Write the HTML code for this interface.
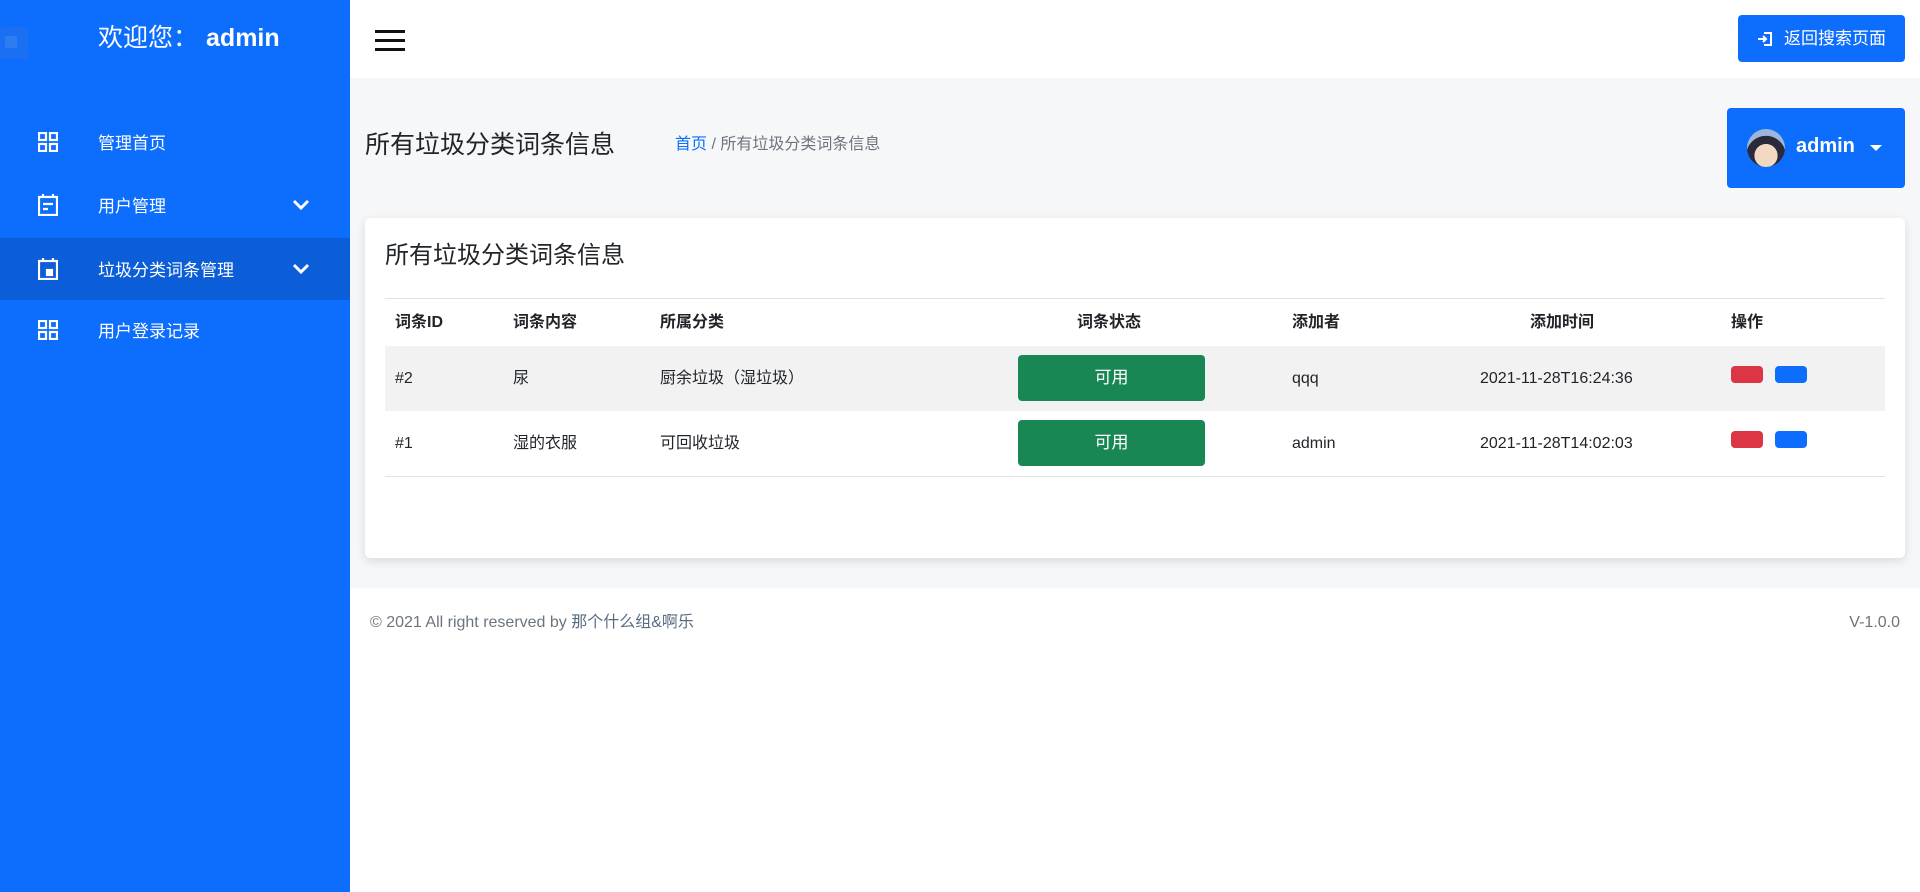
<!DOCTYPE html>
<html><head><meta charset="utf-8"><style>
*{box-sizing:border-box;margin:0;padding:0}
body{width:1920px;height:892px;overflow:hidden;font-family:"Liberation Sans","Noto Sans CJK SC",sans-serif;background:#fff;position:relative;color:#212529}
.side{position:absolute;left:0;top:0;width:350px;height:892px;background:#0d6efd;color:#fff}
.welcome{position:absolute;left:98px;top:23px;font-size:25px;line-height:30px}
.welcome b{font-weight:600;margin-left:8px}
.logo{position:absolute;left:0;top:27px;width:28px;height:32px;border-radius:4px;background:#1a6ff2}
.logo i{position:absolute;left:5px;top:9px;width:12px;height:12px;background:#2f7cf0}
.nav{position:absolute;left:0;width:350px;height:62px;font-size:17px}
.nav span{position:absolute;left:98px;top:21px;line-height:24px}
.nav svg.ic{position:absolute;left:38px;top:50%;transform:translateY(-50%)}
.nav svg.ch{position:absolute;left:292px;top:50%;transform:translateY(-50%)}
.nav.act{background:#0b5ed7}
.top{position:absolute;left:350px;top:0;right:0;height:78px;background:#fff}
.ham{position:absolute;left:375px;top:30px;width:30px}
.ham i{display:block;height:3px;background:#111;margin-bottom:6px}
.ret{position:absolute;left:1738px;top:15px;width:167px;height:47px;background:#0d6efd;border-radius:4px;color:#fff;font-size:17px;line-height:47px;padding-left:46px}
.ret svg{position:absolute;left:19px;top:16px}
.main{position:absolute;left:350px;top:78px;right:0;height:510px;background:#f6f7f9}
.ptitle{position:absolute;left:365px;top:128px;font-size:25px;line-height:34px;color:#212529}
.bc{position:absolute;left:675px;top:134px;font-size:16px;line-height:22px;color:#6c757d}
.bc a{color:#0d6efd}
.dd{position:absolute;left:1727px;top:108px;width:178px;height:80px;background:#0d6efd;border-radius:4px;color:#fff;font-size:20px;font-weight:600}
.av{position:absolute;left:20px;top:21px;width:38px;height:38px;border-radius:50%;background:radial-gradient(circle at 50% 70%,#f3d9c4 0 35%,#2a2a3a 36% 60%,#9bb6d8 61%)}
.dd span{position:absolute;left:69px;top:27px}
.dd .car{position:absolute;left:143px;top:37px;border:6px solid transparent;border-top:6px solid #fff;border-bottom:0}
.card{position:absolute;left:365px;top:218px;width:1540px;height:340px;background:#fff;border-radius:5px;box-shadow:0 3px 10px rgba(0,0,0,.12)}
.ctitle{position:absolute;left:385px;top:239px;font-size:24px;line-height:34px}
.tb{position:absolute;left:385px;width:1500px}
.c{position:absolute;top:50%;margin-top:-12px;height:24px;line-height:24px;font-size:16px;white-space:nowrap}
.h .c{font-weight:700;font-size:16px}
.st{position:absolute;left:1018px;top:9px;width:187px;height:46px;background:#198754;color:#fff;border-radius:4px;text-align:center;line-height:46px;font-size:17px}
.bt{position:absolute;top:20px;width:32px;height:17px;border-radius:4px}
.foot{position:absolute;top:611px;font-size:16px;line-height:24px;height:24px;color:#6c757d}
</style></head><body>
<div class="side">
 <div class="logo"><i></i></div>
 <div class="welcome">欢迎您：<b>admin</b></div>
 <div class="nav" style="top:111px"><svg class="ic" width="20" height="20" viewBox="0 0 20 20" fill="none" stroke="#fff" stroke-width="2.2"><rect x="1" y="1" width="7" height="7"/><rect x="12" y="1" width="7" height="7"/><rect x="1" y="12" width="7" height="7"/><rect x="12" y="12" width="7" height="7"/></svg><span>管理首页</span></div>
 <div class="nav" style="top:174px"><svg class="ic" width="20" height="22" viewBox="0 0 20 22" fill="none" stroke="#fff" stroke-width="2.2"><rect x="1" y="3" width="18" height="18"/><path d="M5 0v4M15 0v4M5 10h10M5 15h5"/></svg><span>用户管理</span><svg class="ch" width="18" height="12" viewBox="0 0 18 12"><path d="M2 2l7 7 7-7" stroke="#fff" stroke-width="3" fill="none"/></svg></div>
 <div class="nav act" style="top:238px"><svg class="ic" width="20" height="22" viewBox="0 0 20 22" fill="none" stroke="#fff" stroke-width="2.2"><rect x="1" y="3" width="18" height="18"/><path d="M5 0v4M15 0v4"/><rect x="9" y="12" width="5" height="5" fill="#fff"/></svg><span>垃圾分类词条管理</span><svg class="ch" width="18" height="12" viewBox="0 0 18 12"><path d="M2 2l7 7 7-7" stroke="#fff" stroke-width="3" fill="none"/></svg></div>
 <div class="nav" style="top:299px"><svg class="ic" width="20" height="20" viewBox="0 0 20 20" fill="none" stroke="#fff" stroke-width="2.2"><rect x="1" y="1" width="7" height="7"/><rect x="12" y="1" width="7" height="7"/><rect x="1" y="12" width="7" height="7"/><rect x="12" y="12" width="7" height="7"/></svg><span>用户登录记录</span></div>
</div>
<div class="top"></div>
<div class="ham"><i></i><i></i><i></i></div>
<div class="ret"><svg width="16" height="16" viewBox="0 0 16 16" fill="none" stroke="#fff" stroke-width="2"><path d="M7 2h7v12H7M1 8h8M6 5l3 3-3 3"/></svg>返回搜索页面</div>
<div class="main"></div>
<div class="ptitle">所有垃圾分类词条信息</div>
<div class="bc"><a>首页</a> / 所有垃圾分类词条信息</div>
<div class="dd"><div class="av"></div><span>admin</span><i class="car"></i></div>
<div class="card"></div>
<div class="ctitle">所有垃圾分类词条信息</div>
<div class="tb h" style="top:298px;height:48px;border-top:1px solid #dee2e6">
 <span class="c" style="left:10px">词条ID</span><span class="c" style="left:128px">词条内容</span><span class="c" style="left:275px">所属分类</span><span class="c" style="left:692px">词条状态</span><span class="c" style="left:907px">添加者</span><span class="c" style="left:1145px">添加时间</span><span class="c" style="left:1346px">操作</span>
</div>
<div class="tb" style="top:346px;height:65px;background:#f2f2f2">
 <span class="c" style="left:10px">#2</span><span class="c" style="left:128px">尿</span><span class="c" style="left:275px">厨余垃圾（湿垃圾）</span><div class="st" style="left:633px">可用</div><span class="c" style="left:907px">qqq</span><span class="c" style="left:1095px">2021-11-28T16:24:36</span><div class="bt" style="left:1346px;background:#dc3545"></div><div class="bt" style="left:1390px;background:#0d6efd"></div>
</div>
<div class="tb" style="top:411px;height:66px;border-bottom:1px solid #dee2e6">
 <span class="c" style="left:10px">#1</span><span class="c" style="left:128px">湿的衣服</span><span class="c" style="left:275px">可回收垃圾</span><div class="st" style="left:633px">可用</div><span class="c" style="left:907px">admin</span><span class="c" style="left:1095px">2021-11-28T14:02:03</span><div class="bt" style="left:1346px;background:#dc3545"></div><div class="bt" style="left:1390px;background:#0d6efd"></div>
</div>
<div class="foot" style="left:370px">© 2021 All right reserved by <span style="color:#5a6b80">那个什么组&amp;啊乐</span></div>
<div class="foot" style="right:20px">V-1.0.0</div>
</body></html>
